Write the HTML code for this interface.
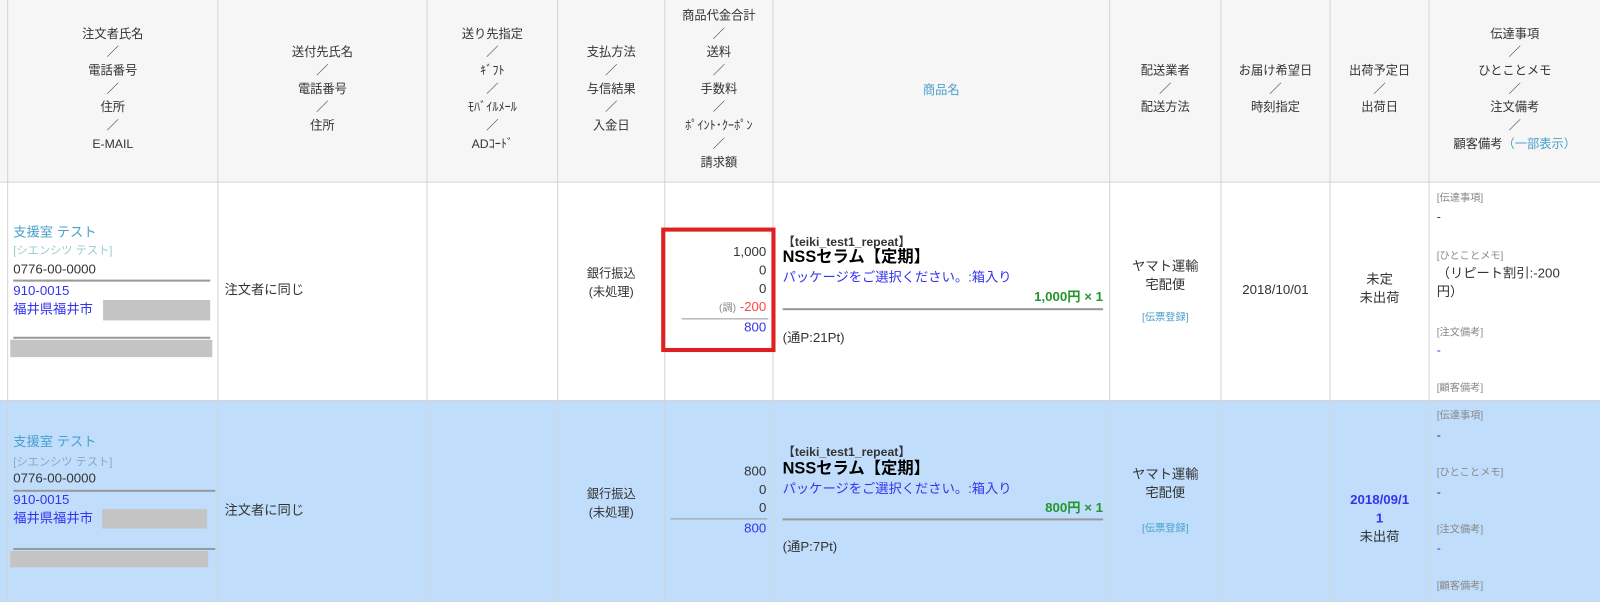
<!DOCTYPE html>
<html><head><meta charset="utf-8"><style>
*{margin:0;padding:0;box-sizing:border-box}
body{width:1600px;height:603px;background:#fff;position:relative;overflow:hidden;font-family:"Liberation Sans","Noto Sans CJK JP",sans-serif;font-size:12px;color:#333}
#w{position:absolute;left:0;top:0;width:1568px;height:591px;transform:scale(1.0204);transform-origin:0 0}
.bg{position:absolute;left:0;width:1568px}
.vl{position:absolute;width:1px;background:#d4d4d4}
.hl{position:absolute;height:1px;background:#d4d4d4;left:0;width:1568px}
.t{position:absolute;white-space:nowrap;line-height:18px}
.c{text-align:center}
.r{text-align:right}
.b{color:#3333ee}.lb{color:#4aa0cc}.g{color:#22962c;font-weight:bold}
.sm{font-size:10px;color:#888}
.gray{position:absolute;background:#c4c4c4}
.ul{position:absolute;height:2px;background:#999}
</style></head><body><div id="w">
<div class="bg" style="top:0;height:178px;background:#f5f6f5"></div>
<div class="bg" style="top:392px;height:197px;background:#c0defb"></div>
<div class="hl" style="top:178px"></div>
<div class="hl" style="top:392px"></div>
<div class="hl" style="top:589px"></div>
<div class="vl" style="left:7px;top:0;height:590px"></div>
<div class="vl" style="left:213px;top:0;height:590px"></div>
<div class="vl" style="left:418px;top:0;height:590px"></div>
<div class="vl" style="left:546px;top:0;height:590px"></div>
<div class="vl" style="left:651px;top:0;height:590px"></div>
<div class="vl" style="left:757px;top:0;height:590px"></div>
<div class="vl" style="left:1087px;top:0;height:590px"></div>
<div class="vl" style="left:1196px;top:0;height:590px"></div>
<div class="vl" style="left:1303px;top:0;height:590px"></div>
<div class="vl" style="left:1400px;top:0;height:590px"></div>

<!-- header -->
<div class="t c" style="left:8px;width:205px;top:24px">注文者氏名<br>／<br>電話番号<br>／<br>住所<br>／<br>E-MAIL</div>
<div class="t c" style="left:214px;width:204px;top:42px">送付先氏名<br>／<br>電話番号<br>／<br>住所</div>
<div class="t c" style="left:419px;width:127px;top:24px">送り先指定<br>／<br>ｷﾞﾌﾄ<br>／<br>ﾓﾊﾞｲﾙﾒｰﾙ<br>／<br>ADｺｰﾄﾞ</div>
<div class="t c" style="left:547px;width:104px;top:42px">支払方法<br>／<br>与信結果<br>／<br>入金日</div>
<div class="t c" style="left:652px;width:105px;top:6px">商品代金合計<br>／<br>送料<br>／<br>手数料<br>／<br>ﾎﾟｲﾝﾄ･ｸｰﾎﾟﾝ<br>／<br>請求額</div>
<div class="t c lb" style="left:758px;width:329px;top:79px">商品名</div>
<div class="t c" style="left:1088px;width:108px;top:60px">配送業者<br>／<br>配送方法</div>
<div class="t c" style="left:1197px;width:106px;top:60px">お届け希望日<br>／<br>時刻指定</div>
<div class="t c" style="left:1304px;width:96px;top:60px">出荷予定日<br>／<br>出荷日</div>
<div class="t c" style="left:1401px;width:167px;top:24px">伝達事項<br>／<br>ひとことメモ<br>／<br>注文備考<br>／<br>顧客備考<span class="lb">（一部表示）</span></div>

<!-- row1 -->
<div class="t lb" style="left:13px;top:219px;font-size:13px">支援室 テスト</div>
<div class="t" style="left:13px;top:237px;font-size:11px;color:#9cc">[シエンシツ テスト]</div>
<div class="t" style="left:13px;top:255px;font-size:13px">0776-00-0000</div>
<div class="ul" style="left:13px;top:274px;width:193px"></div>
<div class="t b" style="left:13px;top:276px;font-size:13px">910-0015</div>
<div class="t b" style="left:13px;top:294px;font-size:13px">福井県福井市</div>
<div class="gray" style="left:101px;top:294px;width:105px;height:20px"></div>
<div class="ul" style="left:13px;top:330px;width:193px"></div>
<div class="gray" style="left:10px;top:333px;width:198px;height:17px"></div>
<div class="t" style="left:220px;top:275px;font-size:13px">注文者に同じ</div>
<div class="t c" style="left:547px;width:104px;top:259px">銀行振込<br>(未処理)</div>
<div style="position:absolute;left:648px;top:223px;width:112px;height:122px;border:4px solid #e02020"></div>
<div class="t r" style="left:660px;width:91px;top:238px;line-height:18px;font-size:13px">1,000<br>0<br>0<br><span class="sm">(調)</span> <span style="color:#f44">-200</span></div>
<div class="ul" style="left:668px;top:312px;width:85px;height:1px"></div>
<div class="t r b" style="left:660px;width:91px;top:312px;font-size:13px">800</div>
<div class="t" style="left:767px;top:228px;font-weight:bold;font-size:12px">【teiki_test1_repeat】</div>
<div class="t" style="left:767px;top:244px;font-weight:bold;font-size:16px;color:#000">NSSセラム【定期】</div>
<div class="t b" style="left:767px;top:263px;font-size:13px">パッケージをご選択ください。:箱入り</div>
<div class="t r g" style="left:767px;width:314px;top:282px;font-size:13px">1,000円 × 1</div>
<div class="ul" style="left:767px;top:302px;width:314px"></div>
<div class="t" style="left:767px;top:322px;font-size:13px">(通P:21Pt)</div>
<div class="t c" style="left:1088px;width:108px;top:252px;font-size:13px">ヤマト運輸<br>宅配便</div>
<div class="t c lb" style="left:1088px;width:108px;top:303px;font-size:10px">[伝票登録]</div>
<div class="t c" style="left:1197px;width:106px;top:275px;font-size:13px">2018/10/01</div>
<div class="t c" style="left:1304px;width:96px;top:265px;font-size:13px">未定<br>未出荷</div>
<div class="t sm" style="left:1408px;top:186px">[伝達事項]</div>
<div class="t" style="left:1408px;top:203px">-</div>
<div class="t sm" style="left:1408px;top:243px">[ひとことメモ]</div>
<div class="t" style="left:1408px;top:259px;font-size:13px"> （リピート割引:-200<br>円）</div>
<div class="t sm" style="left:1408px;top:318px">[注文備考]</div>
<div class="t b" style="left:1408px;top:334px">-</div>
<div class="t sm" style="left:1408px;top:372px">[顧客備考]</div>

<!-- row2 -->
<div class="t lb" style="left:13px;top:424px;font-size:13px">支援室 テスト</div>
<div class="t" style="left:13px;top:444px;font-size:11px;color:#8ab">[シエンシツ テスト]</div>
<div class="t" style="left:13px;top:460px;font-size:13px">0776-00-0000</div>
<div class="ul" style="left:13px;top:480px;width:198px"></div>
<div class="t b" style="left:13px;top:481px;font-size:13px">910-0015</div>
<div class="t b" style="left:13px;top:499px;font-size:13px">福井県福井市</div>
<div class="gray" style="left:100px;top:499px;width:103px;height:19px"></div>
<div class="ul" style="left:13px;top:537px;width:198px"></div>
<div class="gray" style="left:10px;top:540px;width:194px;height:16px"></div>
<div class="t" style="left:220px;top:491px;font-size:13px">注文者に同じ</div>
<div class="t c" style="left:547px;width:104px;top:475px">銀行振込<br>(未処理)</div>
<div class="t r" style="left:660px;width:91px;top:453px;line-height:18px;font-size:13px">800<br>0<br>0</div>
<div class="ul" style="left:657px;top:508px;width:95px;height:1px"></div>
<div class="t r b" style="left:660px;width:91px;top:509px;font-size:13px">800</div>
<div class="t" style="left:767px;top:434px;font-weight:bold;font-size:12px">【teiki_test1_repeat】</div>
<div class="t" style="left:767px;top:451px;font-weight:bold;font-size:16px;color:#000">NSSセラム【定期】</div>
<div class="t b" style="left:767px;top:470px;font-size:13px">パッケージをご選択ください。:箱入り</div>
<div class="t r g" style="left:767px;width:314px;top:489px;font-size:13px">800円 × 1</div>
<div class="ul" style="left:767px;top:508px;width:314px"></div>
<div class="t" style="left:767px;top:527px;font-size:13px">(通P:7Pt)</div>
<div class="t c" style="left:1088px;width:108px;top:456px;font-size:13px">ヤマト運輸<br>宅配便</div>
<div class="t c lb" style="left:1088px;width:108px;top:510px;font-size:10px">[伝票登録]</div>
<div class="t c b" style="left:1304px;width:96px;top:481px;font-size:13px;font-weight:bold">2018/09/1<br>1</div>
<div class="t c" style="left:1304px;width:96px;top:517px;font-size:13px">未出荷</div>
<div class="t sm" style="left:1408px;top:399px">[伝達事項]</div>
<div class="t" style="left:1408px;top:417px">-</div>
<div class="t sm" style="left:1408px;top:455px">[ひとことメモ]</div>
<div class="t" style="left:1408px;top:473px">-</div>
<div class="t sm" style="left:1408px;top:511px">[注文備考]</div>
<div class="t b" style="left:1408px;top:528px">-</div>
<div class="t sm" style="left:1408px;top:566px">[顧客備考]</div>
</div></body></html>
